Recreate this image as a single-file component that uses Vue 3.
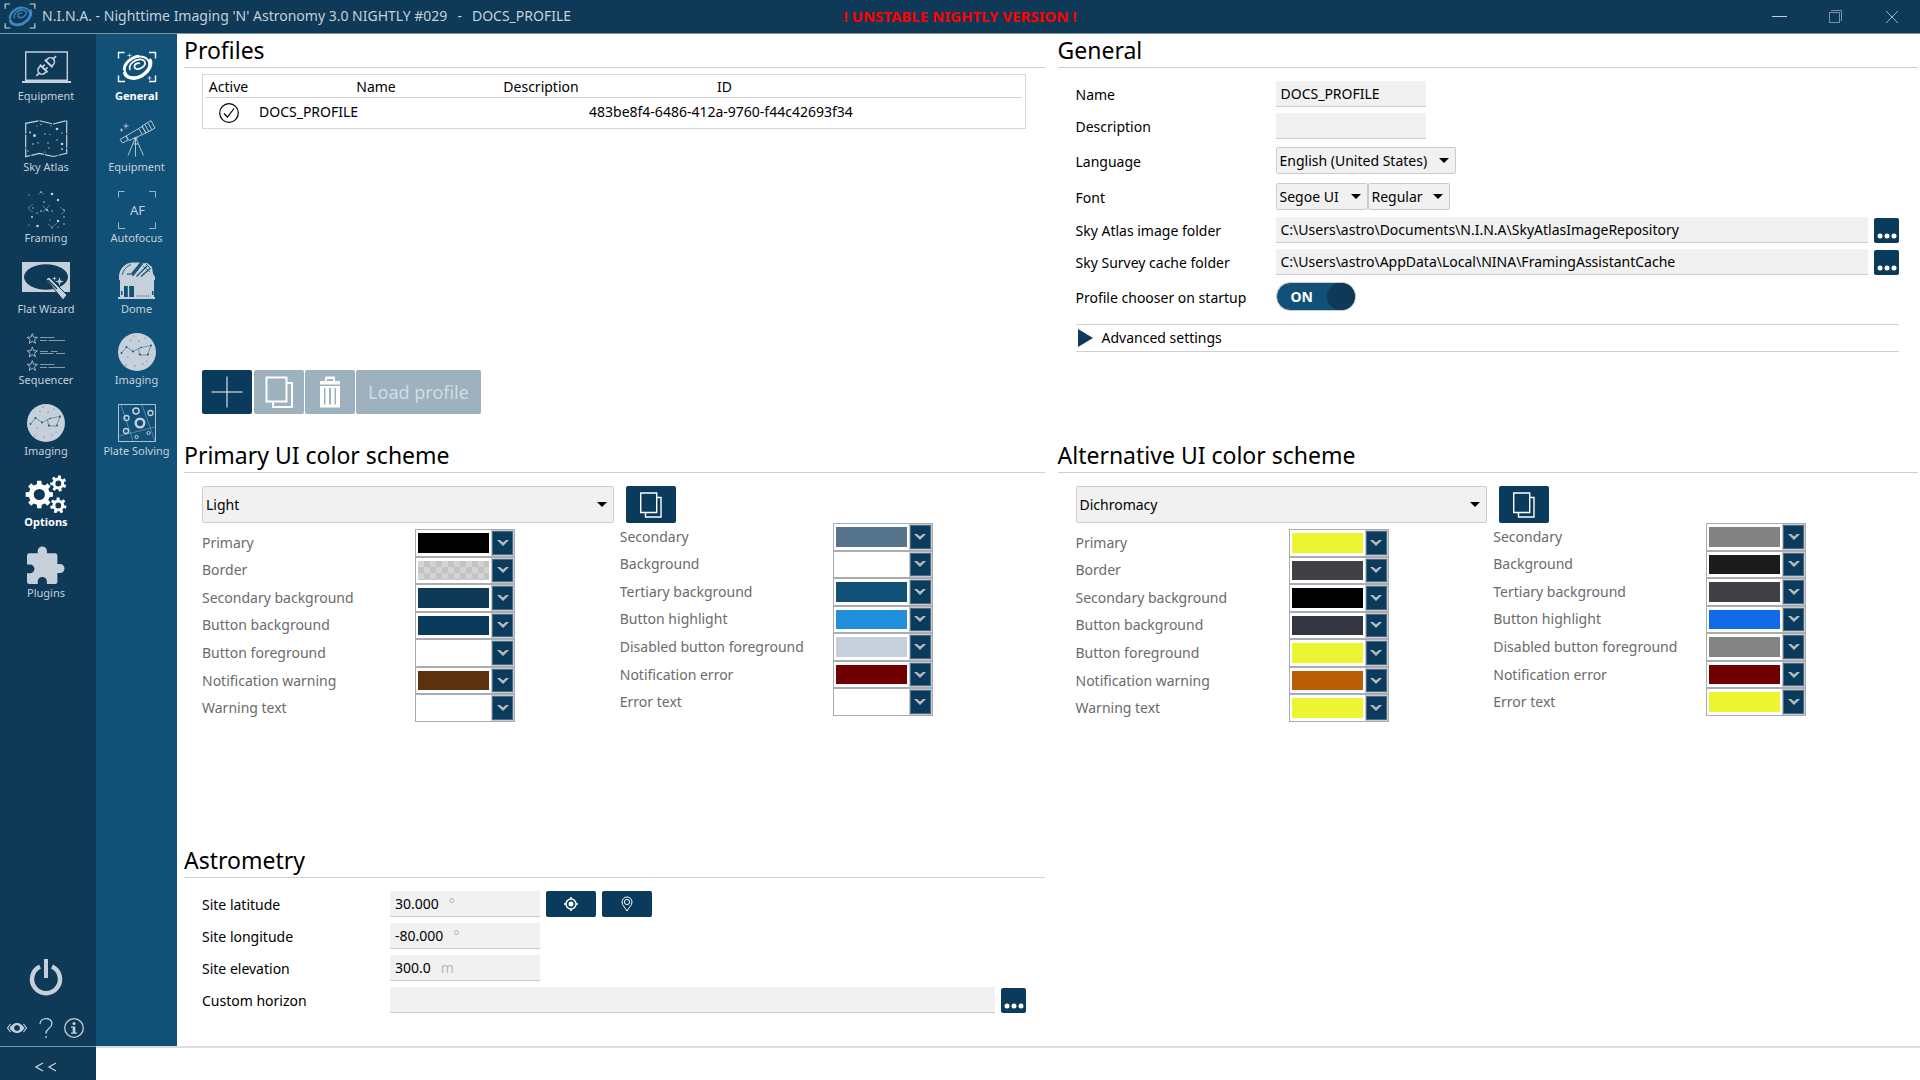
<script setup>
import { ref } from 'vue'

// Outline of a gear wheel with a round hole, used by the options icon.
function gear(cx, cy, outer, root, hole, teeth, turn = 0) {
  const step = (Math.PI * 2) / teeth
  const at = (r, a) => `${(cx + r * Math.cos(a)).toFixed(2)} ${(cy + r * Math.sin(a)).toFixed(2)}`
  let d = ''
  for (let i = 0; i < teeth; i++) {
    const a = i * step + turn
    d += `${i ? 'L' : 'M'}${at(root, a - step * 0.29)}L${at(outer, a - step * 0.2)}L${at(outer, a + step * 0.2)}L${at(root, a + step * 0.29)}`
  }
  return `<path fill-rule="evenodd" d="${d}ZM${cx - hole} ${cy}a${hole} ${hole} 0 1 0 ${hole * 2} 0a${hole} ${hole} 0 1 0 ${-hole * 2} 0Z"/>`
}

function star(cx, cy, r) {
  let points = ''
  for (let i = 0; i < 10; i++) {
    const a = -Math.PI / 2 + (i * Math.PI) / 5
    const rr = i % 2 ? r * 0.42 : r
    points += `${(cx + rr * Math.cos(a)).toFixed(2)},${(cy + rr * Math.sin(a)).toFixed(2)} `
  }
  return `<polygon points="${points}" fill="none" stroke="currentColor" stroke-width="0.8"/>`
}

const dots = (list) => list.map(([x, y, r]) => `<circle cx="${x}" cy="${y}" r="${r}"/>`).join('')

const galaxy = `
  <g fill="none" stroke="currentColor">
    <ellipse cx="25" cy="18" rx="13" ry="9.6" transform="rotate(-28 25 18)" stroke-width="2"/>
    <path d="M12.5 23c1 6.500 10 8 17 4 8-5 11-12 8-17" stroke-width="3.400"/>
    <path d="M18 21c-2-6 5-11 11-10.500 5.500 1 5 6 1 8-4 3-8 1.500-7.500-1.500 0-2 3-3.500 5.500-2.500" stroke-width="1.700"/>
    <path d="M12 21c0-7 7-13 15-14" stroke-width="2.400"/>
  </g>`

const moon = `
  <circle cx="25" cy="19" r="19"/>
  <g fill="none" stroke="#2a628a" stroke-width="0.7" opacity="0.8">
    <path d="M9.500 20l5-6 6.500 4.500 8-4 10-2-3.500 9.500h-8l-1-7"/>
  </g>
  <g fill="#0e3957" opacity="0.85">
    ${dots([[9.5, 20, 0.9], [14.5, 14, 0.9], [21, 18.500, 0.9], [29, 14.500, 0.8], [39, 12.500, 0.9], [36, 21.500, 0.9], [28, 21.500, 0.9], [16, 24, 0.5], [14, 32, 0.5], [23, 33, 0.6], [27, 8, 0.6], [19, 7, 0.5], [31, 31, 0.6], [35, 28, 0.5], [22, 3, 0.5], [33, 5, 0.5]])}
  </g>`

const corners = (y1, y2, w) => `<path fill="none" stroke="currentColor" stroke-width="${w}" d="M6.500 ${y1 + 6}v-6h6M37 ${y1}h6.500v6M43.500 ${y2 - 6}v6h-6.500M13 ${y2}h-6.500v-6"/>`

const icons = {
  laptop: `
    <path fill="none" stroke="currentColor" stroke-width="1.4" d="M4.700 3h41.600v28.300h-41.600z"/>
    <path d="M1 32h49v2h-49z"/>
    <g fill="none" stroke="currentColor" stroke-width="1.600" transform="translate(25.200 17) rotate(-45)">
      <path d="M-14 0h4M10 0h4"/>
      <path d="M-3.500 -4h-2.500a4 4 0 0 0 0 8h2.500zM3.500 -4h2.500a4 4 0 0 1 0 8h-2.500z"/>
      <path d="M-3.500 -5.500v11M3.500 -5.500v11M-3.500 -2h3.500M-3.500 2h3.500"/>
    </g>`,
  map: `
    <path fill="none" stroke="currentColor" stroke-width="1.200" stroke-dasharray="13 1" d="M4.700 3.300L18.300.7l14 3.300L45.700.7V33.300L32.300 36.500l-14-3.200L4.700 36.700z"/>
    ${dots([[9, 12.500, 1], [13.500, 15.500, 1.500], [12, 24, 0.8], [20, 4.500, 0.7], [17, 23, 0.7], [24, 14, 0.7], [29, 14.500, 0.6], [27, 23, 0.7], [28, 28, 0.7], [36, 9, 1.300], [41, 13, 0.7], [36, 20, 0.7], [41, 24, 1.300], [41, 29, 0.9], [7, 31, 0.7], [16, 6, 0.6], [24, 32, 0.6], [30, 6, 0.6]])}`,
  framing: `
    <g fill="none" stroke="currentColor" stroke-width="0.600" opacity="0.700">
      <path d="M17 3.500l3-2.500 3 2.500M12 13l-5 4 5 4.500M39 16l5 4-4 3.500M22 15l6 6M29 14l-7 7M27 33l4 3 5-4"/>
    </g>
    ${dots([[8, 4, 0.6], [31, 3, 1.300], [37, 9, 1.200], [23, 11, 0.8], [31, 20, 0.7], [16, 22, 0.7], [11, 26, 1], [26, 19, 1], [20, 20, 0.8], [8, 34, 0.6], [16.500, 35, 1.300], [29, 29, 0.6], [37, 30, 1.200], [43, 33, 0.8], [43, 26, 0.8], [20, 1, 0.8], [12, 17, 0.7], [43, 19, 0.7], [31, 37, 0.7], [37, 36, 0.6]])}`,
  wand: `
    <path fill-rule="evenodd" d="M1 0h48v30h-48zM3 15a22 12.700 0 1 0 44 0a22 12.700 0 1 0-44 0z"/>
    <path d="M25 17l3-2 18 18-4 5z" stroke="#0e3957" stroke-width="1"/>
    <path d="M27 18l9 9" stroke="#0e3957" stroke-width="1.200" fill="none"/>
    <path d="M38.500 15l1 3.500 3.500 1-3.500 1-1 3.500-1-3.500-3.500-1 3.500-1z"/>
    <path d="M33.500 14.500v4M31.500 16.500h4M43 23v3M41.500 24.500h3" stroke="currentColor" stroke-width="0.800"/>`,
  sequence: `
    ${star(11.3, 6, 5.4)}${star(11.3, 19.500, 5.4)}${star(11.3, 33, 5.4)}
    <g stroke="currentColor" fill="none" opacity="0.650">
      <path d="M19 4.500h14.500M19 7.500h7M27.500 7.500h16.500M19 18.500h8M30 18.500h6.500M19 20.500h13.500M35 20.500h9M19 31.500h14.500M19 34.500h7M27.500 34.500h16.500"/>
    </g>`,
  moon,
  gears: gear(18.3, 19.5, 13.8, 10.6, 5.6, 8) + gear(37.3, 8.5, 8.2, 5.9, 2.900, 7, 0.4) + gear(37.3, 30.5, 8.2, 5.9, 2.900, 7, 0.2),
  puzzle: `<path d="M8.500 7.300h8.200v-2.300a4.600 4.600 0 0 1 9.200 0v2.300h8a2.500 2.500 0 0 1 2.500 2.500v8.200h2.600a4.500 4.500 0 0 1 0 9h-2.600v8.500a2.500 2.500 0 0 1-2.500 2.500h-8v-2.500a4.600 4.600 0 0 0-9.200 0v2.500h-8.200a2.500 2.500 0 0 1-2.500-2.500v-8.300h3a4.400 4.400 0 0 0 0-8.800h-3v-8.600a2.500 2.500 0 0 1 2.500-2.500z"/>`,
  general: `${corners(3.5, 32.5, 1.4)}${galaxy}
    <path d="M17.500 4.500v4M15.500 6.500h4M37.500 27v4M35.500 29h4" stroke="currentColor" stroke-width="0.700"/>`,
  telescope: `
    <g fill="none" stroke="currentColor" stroke-width="0.900">
      <path d="M8 19.500l2.500 3.500 5.500-3-2-4zM14 16l16-9.500 4 6.500-17 7.500z"/>
      <path d="M30 6l9-5.500 4 7.500-9 5zM33 4.500l4 7.500M36 3l4 7M27 9l3 5"/>
      <path d="M23.500 17.500v19M23.500 17.500l-7.500 18M23.500 17.500l8 18M22 18h4M21.500 24h5"/>
    </g>
    <path d="M14 3.500v5M11.500 6h5M9.500 8.500v3M8 10h3" stroke="currentColor" stroke-width="0.900"/>`,
  autofocus: `${corners(0.5, 37.5, 0.8)}<text x="25.500" y="23.500" text-anchor="middle" font-size="13">AF</text>`,
  dome: `
    <path d="M7 15c0-8 6-14 13-14.500h8l-9 11h-4v3.500z"/>
    <path d="M10 14c1-6 5-10 9-11.500" stroke="#125177" stroke-width="0.900" fill="none"/>
    <path d="M21 12.500l9-11 5-.5 5 4 1 6.500 2 3.500h-36v-2z"/>
    <path d="M20.500 14l10-12.500M24.500 14.500l11-11M29 14.500l9-8" stroke="#125177" stroke-width="1.300" fill="none"/>
    <path d="M31 4l7 6M34 2l5 5" stroke="#125177" stroke-width="0.800" fill="none"/>
    <path d="M7 15h36v3h-1v17h1v2h-37v-2h2v-17h-1z"/>
    <path fill="#125177" d="M12 24h10v11h-10zM9 29h1.500v4h-1.500zM40 29h1.500v4h-1.500z"/>
    <path d="M16.500 24v11" stroke="currentColor" stroke-width="1.400"/>
    <path d="M25 34h12" stroke="#125177" stroke-width="1.200" stroke-dasharray="1 1.200"/>`,
  plate: `
    <g fill="none" stroke="currentColor">
      <path stroke-width="0.900" d="M6.500.5h37v37h-37z"/>
      <path stroke-width="0.700" opacity="0.600" d="M9 1l12 36M30 1l13 36M7 32l36-9"/>
      <circle cx="28" cy="19" r="4.300" stroke-width="2.400"/>
      <circle cx="24" cy="7" r="3" stroke-width="1.500"/><circle cx="14.500" cy="14" r="2.500" stroke-width="1.300"/>
      <circle cx="38.500" cy="9" r="2.500" stroke-width="1.300"/><circle cx="14" cy="27" r="2.500" stroke-width="1.300"/>
      <circle cx="36.500" cy="29" r="1.600"/><circle cx="24.500" cy="33" r="1.600"/>
    </g>`
}

const mainNav = [
  { label: 'Equipment', icon: 'laptop' },
  { label: 'Sky Atlas', icon: 'map' },
  { label: 'Framing', icon: 'framing' },
  { label: 'Flat Wizard', icon: 'wand' },
  { label: 'Sequencer', icon: 'sequence' },
  { label: 'Imaging', icon: 'moon' },
  { label: 'Options', icon: 'gears', active: true },
  { label: 'Plugins', icon: 'puzzle' }
]

const subNav = [
  { label: 'General', icon: 'general', active: true },
  { label: 'Equipment', icon: 'telescope' },
  { label: 'Autofocus', icon: 'autofocus' },
  { label: 'Dome', icon: 'dome' },
  { label: 'Imaging', icon: 'moon' },
  { label: 'Plate Solving', icon: 'plate' }
]

const schemes = [
  {
    id: 'primary',
    title: 'Primary UI color scheme',
    selected: 'Light',
    columns: [
      [
        ['Primary', '#000000'],
        ['Border', ''],
        ['Secondary background', '#0e3957'],
        ['Button background', '#0b3b5c'],
        ['Button foreground', '#ffffff'],
        ['Notification warning', '#5c320c'],
        ['Warning text', '#ffffff']
      ],
      [
        ['Secondary', '#56748b'],
        ['Background', '#ffffff'],
        ['Tertiary background', '#125177'],
        ['Button highlight', '#2190dc'],
        ['Disabled button foreground', '#c5d0da'],
        ['Notification error', '#700000'],
        ['Error text', '#ffffff']
      ]
    ]
  },
  {
    id: 'alternative',
    title: 'Alternative UI color scheme',
    selected: 'Dichromacy',
    columns: [
      [
        ['Primary', '#ebf531'],
        ['Border', '#3f4146'],
        ['Secondary background', '#000000'],
        ['Button background', '#34363f'],
        ['Button foreground', '#ebf531'],
        ['Notification warning', '#ba5d07'],
        ['Warning text', '#ebf531']
      ],
      [
        ['Secondary', '#828282'],
        ['Background', '#1a1b1c'],
        ['Tertiary background', '#3f4045'],
        ['Button highlight', '#116be8'],
        ['Disabled button foreground', '#848484'],
        ['Notification error', '#700000'],
        ['Error text', '#ebf531']
      ]
    ]
  }
]

const profileName = ref('DOCS_PROFILE')
const description = ref('')
const atlasFolder = ref('C:\\Users\\astro\\Documents\\N.I.N.A\\SkyAtlasImageRepository')
const cacheFolder = ref('C:\\Users\\astro\\AppData\\Local\\NINA\\FramingAssistantCache')
const chooser = ref(true)
const horizon = ref('')
const site = ref([
  { id: 'latitude', label: 'Site latitude', value: '30.000', unit: '°' },
  { id: 'longitude', label: 'Site longitude', value: '-80.000', unit: '°' },
  { id: 'elevation', label: 'Site elevation', value: '300.0', unit: 'm' }
])
</script>

<template>
  <div class="app">
    <header class="titlebar">
      <div class="caption">
        <svg class="logo" viewBox="5 2 40 32" width="32" height="26" aria-hidden="true">
          <g v-html="galaxy" class="logo-galaxy" />
          <path fill="none" stroke="#c5d0da" stroke-width="1.5" d="M6.500 9v-6h6M37 3h6.500v6M43.500 27v6h-6.500M13 33h-6.500v-6" />
        </svg>
        <span>N.I.N.A. - Nighttime Imaging 'N' Astronomy 3.0 NIGHTLY #029</span>
        <span>-</span>
        <span>{{ profileName }}</span>
      </div>
      <strong class="unstable">! UNSTABLE NIGHTLY VERSION !</strong>
      <div class="window-buttons">
        <button type="button" aria-label="Minimize">
          <svg viewBox="0 0 16 16" width="16" height="16"><path d="M0 8.500h15" /></svg>
        </button>
        <button type="button" aria-label="Restore">
          <svg viewBox="0 0 16 16" width="16" height="16"><path opacity="0.600" d="M1.500 4.500h10v10h-10zM3 2.500h10.500v10.500" /></svg>
        </button>
        <button type="button" aria-label="Close">
          <svg viewBox="0 0 16 16" width="16" height="16"><path opacity="0.800" d="M2 3l12 12M14 3L2 15" /></svg>
        </button>
      </div>
    </header>

    <div class="body">
      <nav class="rail main-rail" aria-label="Main">
        <button v-for="item in mainNav" :key="item.label" type="button" class="tab" :class="{ active: item.active }">
          <svg viewBox="0 0 50 38" width="50" height="38" aria-hidden="true" v-html="icons[item.icon]" />
          <span>{{ item.label }}</span>
        </button>
        <button type="button" class="power" aria-label="Power">
          <svg viewBox="0 0 38 38" width="38" height="38">
            <path fill="none" stroke="currentColor" stroke-width="4.500" d="M13 7.500a14 14 0 1 0 12 0" />
            <path fill="none" stroke="currentColor" stroke-width="4" d="M19 0v19" />
          </svg>
        </button>
        <div class="tools">
          <button type="button" aria-label="Color scheme">
            <svg viewBox="0 0 20 20" width="20" height="20">
              <path fill="none" stroke="currentColor" stroke-width="1.200" d="M3.500 6l-3 4 3 4M16.500 6l3 4-3 4" />
              <path fill-rule="evenodd" d="M2.500 10c4-6.500 11-6.500 15 0-4 6.500-11 6.500-15 0zM7 10a3 3 0 1 0 6 0a3 3 0 1 0-6 0z" />
              <circle cx="10" cy="10" r="4" fill="none" stroke="currentColor" stroke-width="2" />
              <circle cx="10" cy="10" r="1.500" fill="#0e3957" />
            </svg>
          </button>
          <button type="button" aria-label="Help">
            <svg viewBox="0 0 20 20" width="20" height="20">
              <path fill="none" stroke="currentColor" stroke-width="1.300" d="M4 6c0-7 12-7 12-.5 0 5-6 4.500-6 10M10 18v2" />
            </svg>
          </button>
          <button type="button" aria-label="About">
            <svg viewBox="0 0 20 20" width="20" height="20">
              <circle cx="10" cy="10" r="9.300" fill="none" stroke="currentColor" stroke-width="1.300" />
              <circle cx="10" cy="5.500" r="1.500" />
              <path d="M7 8.500h4.300v6h1.700v1.300h-6v-1.300h1.700v-4.700h-1.700z" />
            </svg>
          </button>
        </div>
      </nav>

      <nav class="rail sub-rail" aria-label="Options">
        <button v-for="item in subNav" :key="item.label" type="button" class="tab" :class="{ active: item.active }">
          <svg viewBox="0 0 50 38" width="50" height="38" aria-hidden="true" v-html="icons[item.icon]" />
          <span>{{ item.label }}</span>
        </button>
      </nav>

      <main class="content">
        <section class="panel">
          <h2>Profiles</h2>
          <div class="inner profiles">
            <div class="table-box">
              <table>
                <colgroup>
                  <col class="c-active" /><col class="c-name" /><col class="c-desc" /><col class="c-id" /><col />
                </colgroup>
                <thead>
                  <tr><th class="h-active">Active</th><th>Name</th><th>Description</th><th>ID</th><td></td></tr>
                </thead>
                <tbody>
                  <tr>
                    <td class="tick">
                      <svg viewBox="0 0 20 20" width="20" height="20" role="img" aria-label="Active profile">
                        <circle cx="10" cy="10" r="9.300" /><path d="M5 10.500l3.500 3.500 6.500-8.500" />
                      </svg>
                    </td>
                    <td>DOCS_PROFILE</td>
                    <td></td>
                    <td>483be8f4-6486-412a-9760-f44c42693f34</td>
                    <td></td>
                  </tr>
                </tbody>
              </table>
            </div>
            <div class="actions">
              <button type="button" class="btn add" aria-label="Add profile">
                <svg viewBox="0 0 32 32" width="32" height="32"><path d="M16 .5v31M.5 16h31" /></svg>
              </button>
              <button type="button" class="btn" disabled aria-label="Copy profile">
                <svg viewBox="0 0 28 32" width="28" height="32"><path d="M1.500 1.500h20v24h-20zM22 7h5v24h-19v-5" /></svg>
              </button>
              <button type="button" class="btn" disabled aria-label="Delete profile">
                <svg viewBox="0 0 20 32" width="20" height="32">
                  <path class="solid" fill-rule="evenodd" d="M0 5h5v-3.500q0-1 1-1h8q1 0 1 1v3.500h5v3.500h-20zM7 3v2h6v-2zM0 10h20v21.500h-20zM4 12v16.500h1.500v-16.500zM9 12v16.500h2v-16.500zM14.500 12v16.500h1.500v-16.500z" />
                </svg>
              </button>
              <button type="button" class="btn load" disabled>Load profile</button>
            </div>
          </div>
        </section>

        <section class="panel">
          <h2>General</h2>
          <div class="inner general">
            <div class="row"><label for="name">Name</label><input id="name" v-model="profileName" class="field short" type="text" /></div>
            <div class="row"><label for="description">Description</label><input id="description" v-model="description" class="field short" type="text" /></div>
            <div class="row pick-row">
              <label for="language">Language</label>
              <span class="pick language"><select id="language"><option>English (United States)</option></select></span>
            </div>
            <div class="row pick-row">
              <label for="font">Font</label>
              <span class="pick font"><select id="font"><option>Segoe UI</option></select></span>
              <span class="pick weight"><select aria-label="Font weight"><option>Regular</option></select></span>
            </div>
            <div class="row">
              <label for="atlas">Sky Atlas image folder</label>
              <input id="atlas" v-model="atlasFolder" class="field" type="text" />
              <button type="button" class="btn browse" aria-label="Browse image folder"><svg viewBox="0 0 25 25" width="25" height="25"><circle cx="6" cy="18" r="2.500" /><circle cx="13" cy="18" r="2.500" /><circle cx="20" cy="18" r="2.500" /></svg></button>
            </div>
            <div class="row">
              <label for="cache">Sky Survey cache folder</label>
              <input id="cache" v-model="cacheFolder" class="field" type="text" />
              <button type="button" class="btn browse" aria-label="Browse cache folder"><svg viewBox="0 0 25 25" width="25" height="25"><circle cx="6" cy="18" r="2.500" /><circle cx="13" cy="18" r="2.500" /><circle cx="20" cy="18" r="2.500" /></svg></button>
            </div>
            <div class="row toggle-row">
              <label for="chooser">Profile chooser on startup</label>
              <span class="toggle">
                <input id="chooser" v-model="chooser" type="checkbox" />
                <span class="state">{{ chooser ? 'ON' : 'OFF' }}</span>
                <span class="knob"></span>
              </span>
            </div>
            <button type="button" class="advanced" aria-expanded="false">
              <svg viewBox="0 0 16 18" width="16" height="18" aria-hidden="true"><path d="M0 0l15 9-15 9z" /></svg>
              Advanced settings
            </button>
          </div>
        </section>

        <section v-for="scheme in schemes" :key="scheme.id" class="panel">
          <h2>{{ scheme.title }}</h2>
          <div class="inner scheme">
            <div class="scheme-half">
              <span class="pick scheme-pick">
                <select :aria-label="scheme.title"><option>{{ scheme.selected }}</option></select>
              </span>
              <ul class="colors">
                <li v-for="[label, color] in scheme.columns[0]" :key="label">
                  <span class="color-label">{{ label }}</span>
                  <button type="button" class="picker" :aria-label="label + ' color'">
                    <span class="swatch" :class="{ checker: !color }" :style="color ? { backgroundColor: color } : null"></span>
                    <span class="drop"><svg viewBox="0 0 12 8" width="12" height="8"><path d="M0 1h3l3 2.500L9 1h3l-6 6z" /></svg></span>
                  </button>
                </li>
              </ul>
            </div>
            <div class="scheme-half second">
              <button type="button" class="btn copy" :aria-label="'Copy ' + scheme.title">
                <svg viewBox="0 0 22 26" width="22" height="26"><path d="M.7 1h16v19.500h-16zM17 5.500h4v19.500h-15.500v-4" /></svg>
              </button>
              <ul class="colors">
                <li v-for="[label, color] in scheme.columns[1]" :key="label">
                  <span class="color-label">{{ label }}</span>
                  <button type="button" class="picker" :aria-label="label + ' color'">
                    <span class="swatch" :style="{ backgroundColor: color }"></span>
                    <span class="drop"><svg viewBox="0 0 12 8" width="12" height="8"><path d="M0 1h3l3 2.500L9 1h3l-6 6z" /></svg></span>
                  </button>
                </li>
              </ul>
            </div>
          </div>
        </section>

        <section class="panel">
          <h2>Astrometry</h2>
          <div class="inner astrometry">
            <div v-for="item in site" :key="item.id" class="row">
              <label :for="item.id">{{ item.label }}</label>
              <span class="field short measured"><input :id="item.id" v-model="item.value" type="text" /><span class="unit">{{ item.unit }}</span></span>
              <template v-if="item.id === 'latitude'">
                <button type="button" class="btn locate" aria-label="Use GPS position">
                  <svg viewBox="0 0 16 16" width="16" height="16">
                    <circle cx="8" cy="8" r="5" fill="none" stroke="currentColor" stroke-width="1.500" /><circle cx="8" cy="8" r="2.500" fill="currentColor" />
                    <path d="M8 1v2M8 13v2M1 8h2M13 8h2" stroke="currentColor" stroke-width="1.600" />
                  </svg>
                </button>
                <button type="button" class="btn locate" aria-label="Use map position">
                  <svg viewBox="0 0 16 16" width="16" height="16" fill="none" stroke="currentColor">
                    <path d="M8 15c-1.500-3-5-5.500-5-9a5 5 0 0 1 10 0c0 3.500-3.500 6-5 9z" /><circle cx="8" cy="6" r="2.600" />
                  </svg>
                </button>
              </template>
            </div>
            <div class="row">
              <label for="horizon">Custom horizon</label>
              <input id="horizon" v-model="horizon" class="field" type="text" />
              <button type="button" class="btn browse" aria-label="Browse horizon file"><svg viewBox="0 0 25 25" width="25" height="25"><circle cx="6" cy="18" r="2.500" /><circle cx="13" cy="18" r="2.500" /><circle cx="20" cy="18" r="2.500" /></svg></button>
            </div>
          </div>
        </section>
      </main>
    </div>

    <footer class="statusbar">
      <button type="button" class="collapse" aria-label="Collapse menu">
        <svg viewBox="0 0 22 10" width="22" height="10"><path d="M8 1L1 5l7 4M21 1l-7 4 7 4" /></svg>
      </button>
      <div class="status"></div>
    </footer>
  </div>
</template>

<style>
body {
  margin: 0;
  background: #fff;
}
</style>

<style scoped>
.app {
  display: flex;
  flex-direction: column;
  min-height: 100vh;
  font: 14px/20px "Segoe UI", "Noto Sans", "Open Sans", sans-serif;
  color: #000;
}
.app *,
.app *::before,
.app *::after {
  box-sizing: border-box;
}
button,
input,
select {
  margin: 0;
  padding: 0;
  border: 0;
  border-radius: 0;
  background: none;
  font: inherit;
  color: inherit;
}

.titlebar {
  display: grid;
  grid-template-columns: 1fr auto 1fr;
  align-items: center;
  height: 34px;
  background: #0e3957;
  border-bottom: 1px solid #7d92a3;
  color: #c5d0da;
  padding-bottom: 2px;
}
.caption {
  display: flex;
  align-items: center;
  gap: 10px;
  padding-left: 4px;
  white-space: nowrap;
}
.logo {
  margin-right: -4px;
}
.logo-galaxy {
  color: #3f86c4;
}
.unstable {
  font-size: 15px;
  color: #f00;
}
.window-buttons {
  display: flex;
  justify-content: flex-end;
}
.window-buttons button {
  display: flex;
  justify-content: center;
  align-items: center;
  width: 56px;
  height: 30px;
}
.window-buttons path {
  fill: none;
  stroke: currentColor;
}

.body {
  display: flex;
  flex: 1;
}
.rail {
  display: flex;
  flex-direction: column;
  flex: none;
  padding-top: 15px;
  color: #c5d0da;
}
.main-rail {
  width: 96px;
  padding-right: 4px;
  background: #0e3957;
}
.sub-rail {
  width: 81px;
  background: #125177;
}
.tab {
  display: flex;
  flex-direction: column;
  align-items: center;
  height: 71px;
  font-size: 11px;
  line-height: 18px;
  white-space: nowrap;
}
.tab svg,
.power svg,
.tools svg {
  display: block;
  fill: currentColor;
}
.tab.active {
  color: #fff;
  font-weight: 700;
}
.power {
  display: flex;
  justify-content: center;
  margin-top: auto;
  height: 38px;
}
.tools {
  display: flex;
  justify-content: space-between;
  padding: 21px 8px 8px 7px;
}

.content {
  flex: 1;
  display: grid;
  grid-template-columns: minmax(0, 1fr) minmax(0, 1fr);
  grid-template-rows: minmax(405px, auto) minmax(405px, auto) auto;
  align-content: start;
  column-gap: 13px;
  padding: 0 2px 0 7px;
}
.panel {
  display: flex;
  flex-direction: column;
}
h2 {
  height: 34px;
  margin: 0;
  border-bottom: 1px solid #d0d0d2;
  font-size: 23px;
  line-height: 33px;
  font-weight: 400;
}
.inner {
  padding: 0 19px 0 18px;
}
.profiles {
  flex: 1;
  display: flex;
  flex-direction: column;
  justify-content: space-between;
  padding-top: 6px;
  padding-bottom: 25px;
}
.table-box {
  border: 1px solid #d8d8da;
  padding: 2px 3px;
}
table {
  width: 100%;
  table-layout: fixed;
  border-collapse: collapse;
}
thead tr {
  border-bottom: 1px solid #d0d0d2;
}
th {
  padding: 0;
  font-weight: 400;
}
th.h-active {
  padding-right: 3px;
}
td {
  height: 28px;
  padding: 0 5px;
}
thead td {
  height: 19px;
}
.c-active {
  width: 48px;
}
.c-name {
  width: 244px;
}
.c-desc {
  width: 86px;
}
.c-id {
  width: 281px;
}
td.tick {
  padding: 2px 0 0 13px;
}
.tick svg {
  display: block;
  fill: none;
  stroke: #000;
  stroke-width: 1.2;
}
.actions {
  display: flex;
  gap: 1px;
}
.btn {
  display: flex;
  justify-content: center;
  align-items: center;
  flex: none;
  border-radius: 2px;
  background: #0b3b5c;
  color: #fff;
}
.actions .btn {
  width: 50px;
  height: 44px;
}
.actions .add {
  margin-right: 1px;
}
.actions .load {
  width: 125px;
  font-size: 18px;
  color: #d3dce3;
}
.btn:disabled {
  background: #9eb1bf;
}
.actions path,
.copy path {
  fill: none;
  stroke: #fff;
}
.actions .btn:disabled path {
  stroke-width: 2;
}
.actions .btn:disabled path.solid {
  fill: #fff;
  stroke: none;
}

.general {
  padding-top: 10px;
}
.astrometry {
  padding-top: 10px;
}
.row {
  display: flex;
  align-items: center;
  padding: 3px 0;
}
.row > label {
  padding-top: 2px;
}
.general .row > label {
  flex: 0 0 200px;
}
.astrometry .row > label {
  flex: 0 0 188px;
}
.field {
  flex: 1;
  min-width: 0;
  height: 26px;
  padding: 0 5px;
  background: #f1f1f1;
  border-bottom: 1px solid #ccc;
}
.field.short {
  flex: 0 0 150px;
}
.measured {
  display: flex;
  align-items: center;
}
.measured input {
  field-sizing: content;
  margin-right: 10px;
}
.unit {
  color: #b8b8b8;
}
.pick-row {
  padding: 5px 0 4px;
}
.toggle-row {
  padding: 4px 0;
}
.pick {
  position: relative;
  display: block;
  height: 27px;
}
.pick select {
  appearance: none;
  display: block;
  width: 100%;
  height: 100%;
  padding: 0 3px;
  border: 1px solid #ccc;
  border-radius: 2px;
  background: #f1f1f1;
}
.pick::after {
  content: "";
  position: absolute;
  right: 7px;
  top: 50%;
  margin-top: -3px;
  border: 5px solid transparent;
  border-top-color: #000;
  border-bottom: 0;
}
.language {
  width: 180px;
}
.font {
  width: 92px;
}
.weight {
  width: 82px;
}
.browse {
  width: 25px;
  height: 25px;
  margin-left: 6px;
}
.browse svg {
  fill: #fff;
}
.locate {
  width: 50px;
  height: 26px;
  margin-left: 6px;
}
.toggle {
  position: relative;
  display: flex;
  justify-content: space-between;
  align-items: center;
  width: 80px;
  height: 29px;
  padding-left: 14px;
  border: 1px solid #ccc;
  border-radius: 15px;
  background: #125177;
  color: #fff;
  font-weight: 700;
}
.toggle input {
  position: absolute;
  inset: 0;
  width: 100%;
  height: 100%;
  opacity: 0;
}
.knob {
  width: 28px;
  height: 27px;
  border-radius: 14px;
  background: #0e3957;
}
.advanced {
  display: flex;
  align-items: center;
  gap: 8px;
  width: 100%;
  height: 28px;
  margin-top: 9px;
  padding: 0 2px;
  border-top: 1px solid #d0d0d2;
  border-bottom: 1px solid #d0d0d2;
}
.advanced svg {
  fill: #0b3b5c;
}

.scheme {
  display: flex;
  padding-top: 13px;
}
.scheme-half {
  flex: 0 0 50%;
  min-width: 0;
}
.scheme-pick {
  height: 37px;
}
.copy {
  width: 50px;
  height: 37px;
  margin-left: 6px;
}
.copy path {
  stroke-width: 1.4;
}
.second {
  padding-left: 6px;
}
.colors {
  display: grid;
  grid-template-rows: repeat(7, 1fr);
  height: 193px;
  margin: 6px 0 0;
  padding: 0;
  list-style: none;
  color: #6b6b6b;
}
.second .colors {
  margin-top: 0;
}
.colors li {
  display: flex;
  align-items: stretch;
}
.color-label {
  flex: 0 0 213px;
  align-self: center;
}
.picker {
  display: flex;
  width: 100px;
  border: 1px solid #aaabb3;
}
.swatch {
  flex: 1;
  margin: 3px 2px;
  align-self: stretch;
}
.checker {
  background: repeating-conic-gradient(#c3c3c3 0 25%, #d3d3d3 0 50%) 0 0 / 12px 12px;
}
.drop {
  display: flex;
  justify-content: center;
  align-items: center;
  align-self: stretch;
  width: 23px;
  border: 1px solid #8a9aa6;
  outline: 1px solid #c8c9cd;
  outline-offset: -1px;
  box-shadow: inset 0 0 0 1px #4a6c84;
  background: #0b3b5c;
}
.drop svg {
  fill: #b8bcc0;
}

.statusbar {
  display: flex;
  height: 34px;
}
.collapse {
  width: 96px;
  padding: 6px 4px 0 0;
  border-top: 1px solid #7d92a3;
  background: #0e3957;
}
.collapse path {
  fill: none;
  stroke: #c5d0da;
  stroke-width: 1.3;
}
.status {
  flex: 1;
  border-top: 2px solid #dcdcde;
}
</style>
